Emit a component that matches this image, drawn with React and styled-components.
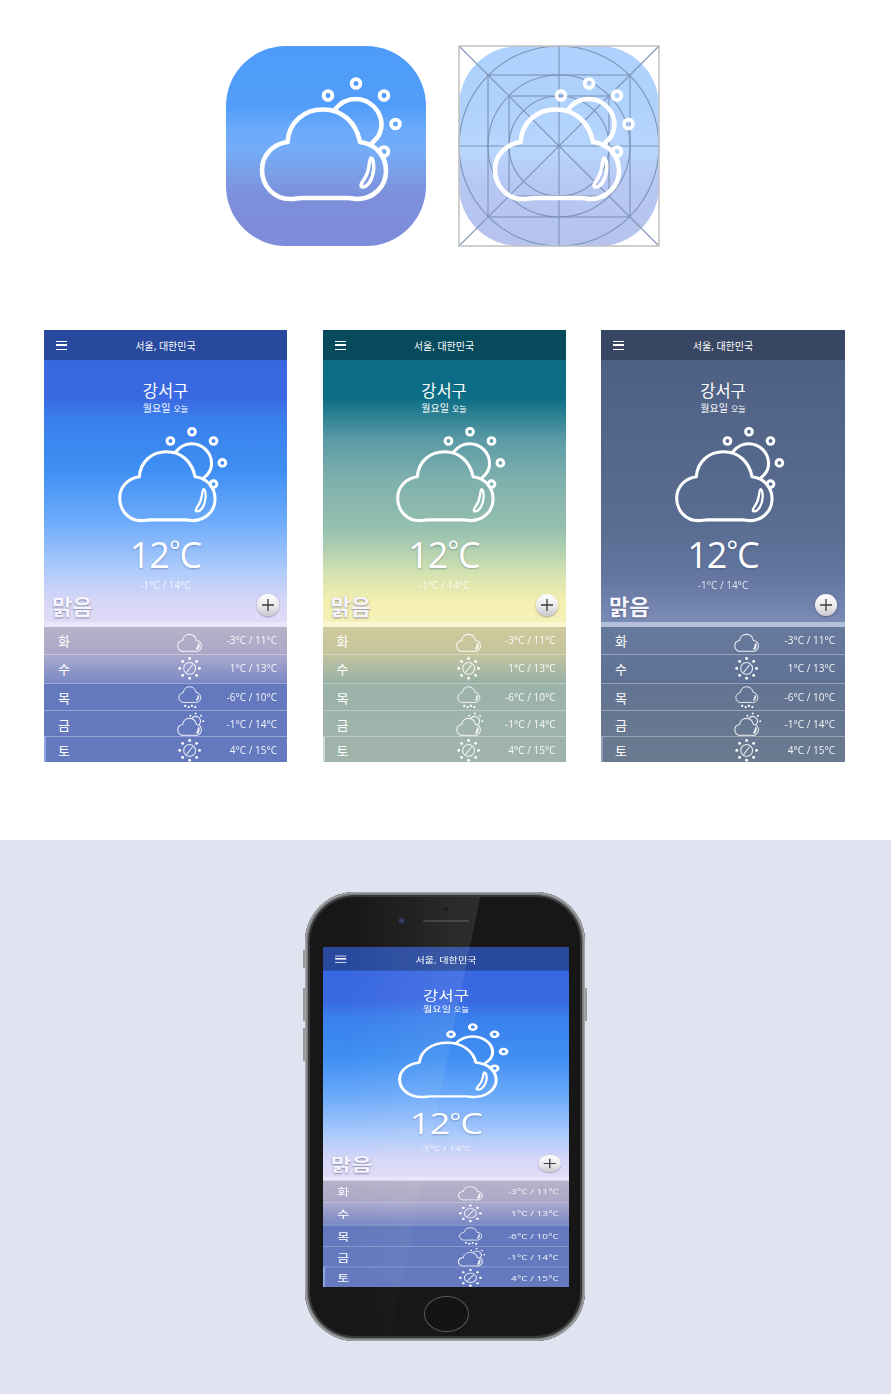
import styled, { createGlobalStyle } from "styled-components";

const GlobalStyle = createGlobalStyle`
  body {
    margin: 0;
    background: #fff;
    font-family: "Open Sans", "Noto Sans CJK KR", sans-serif;
  }
`;

const themes = {
  blue: {
    header: "#28499d",
    sky: "#3565e0 0, #3a69e2 68px, #3a80ec 90px, #3f8ff3 140px, #6caafa 190px, #aecbfb 240px, #d6d6f7 270px, #e0dcf7 292px",
    strip: "#e9e6fa",
    list: "#b7b2c8 0, #aba8c8 27px, #a6a7cc 30px, #7a88c4 56px, #6479bd 57px, #6479be 135px",
    edge: "#8ea3e0",
  },
  teal: {
    header: "#074a5c",
    sky: "#0b6a84 0, #0d6d86 68px, #2b7f93 84px, #5b9ba6 110px, #7fb0ad 150px, #96c0b0 200px, #cfe0b0 240px, #f3efb0 270px, #f6f1b8 292px",
    strip: "#faf6d2",
    list: "#d0c99c 0, #c4c49c 27px, #bdc2a0 30px, #98b1a6 56px, #9cb3aa 57px, #a0b3aa 135px",
    edge: "#c8dcd0",
  },
  slate: {
    header: "#374662",
    sky: "#4b5e80 0, #536689 100px, #5a6d92 200px, #6577a0 250px, #7a8cb5 292px",
    strip: "#b4bfdb",
    list: "#67799b 0, #64779a 27px, #627599 30px, #5f7296 56px, #637493 57px, #6a7a90 135px",
    edge: "#8f9db5",
  },
};

const forecast = [
  { day: "화", kind: "cloud", temp: "-3°C / 11°C", height: 27 },
  { day: "수", kind: "sun", temp: "1°C / 13°C", height: 29 },
  { day: "목", kind: "snow", temp: "-6°C / 10°C", height: 27 },
  { day: "금", kind: "partly", temp: "-1°C / 14°C", height: 26 },
  { day: "토", kind: "sun", temp: "4°C / 15°C", height: 26 },
];

const Page = styled.div`
  width: 891px;
  height: 1394px;
  overflow: hidden;
`;

const TopSection = styled.section`
  height: 840px;
  box-sizing: border-box;
  padding-top: 46px;
`;

const IconRow = styled.div`
  display: flex;
  gap: 33px;
  padding-left: 226px;
`;

const AppIcon = styled.div`
  position: relative;
  width: 200px;
  height: 200px;
  border-radius: 60px;
  background: linear-gradient(
    180deg,
    #4e9bf9 0,
    #519df9 30%,
    #6caafa 42%,
    #74acf8 52%,
    #7a9fe8 63%,
    #7d8fdb 76%,
    #7e8cd9 100%
  );
`;

const GhostIcon = styled(AppIcon)`
  background: linear-gradient(
    180deg,
    #aed2fd 0,
    #afd2fd 30%,
    #b8d6fd 52%,
    #b6c8f3 68%,
    #b6c3ec 100%
  );
`;

const FullSvg = styled.svg`
  position: absolute;
  inset: 0;
  width: 100%;
  height: 100%;
  overflow: visible;
`;

const ScreenRow = styled.div`
  display: flex;
  justify-content: space-between;
  padding: 84px 46px 0 44px;
`;

const ScreenBox = styled.div`
  width: ${(p) => p.$width}px;
  height: 432px;
  display: flex;
  flex-direction: column;
  color: #fff;
  background: linear-gradient(180deg, ${(p) => p.$sky});
`;

const Header = styled.header`
  height: 30px;
  flex: none;
  display: grid;
  grid-template-columns: 1fr auto 1fr;
  align-items: center;
  padding: 0 12px;
  background: ${(p) => p.$color};
  font-size: 10px;
`;

const Burger = styled.div`
  width: 11px;
  height: 9px;
  border-top: 1.5px solid #fff;
  border-bottom: 1.5px solid #fff;
  box-sizing: border-box;
  display: flex;
  align-items: center;
  &::before {
    content: "";
    width: 100%;
    height: 1.5px;
    background: #fff;
  }
`;

const Sky = styled.div`
  flex: 1;
  display: flex;
  flex-direction: column;
  align-items: center;
  padding-top: 20px;
`;

const District = styled.div`
  font-size: 16.5px;
  line-height: 21px;
`;

const DateLine = styled.div`
  font-size: 10px;
  line-height: 14px;
  small {
    font-size: 8px;
    margin-left: 3px;
  }
`;

const HeroIcon = styled.svg`
  width: 115.5px;
  height: 100px;
  margin: 10px 0 0 14.4px;
  flex: none;
`;

const Temperature = styled.div`
  font-size: 36px;
  line-height: 40px;
  letter-spacing: -1px;
  margin-top: 9px;
  text-shadow: 0 1px 2px rgba(40, 60, 110, 0.35);
  span {
    font-size: 27px;
    line-height: 0;
    vertical-align: 7px;
  }
`;

const Range = styled.div`
  font-size: 10px;
  line-height: 14px;
  margin-top: 3px;
  opacity: 0.8;
`;

const Condition = styled.div`
  align-self: stretch;
  display: flex;
  justify-content: space-between;
  align-items: center;
  height: 30px;
  margin-top: -2px;
  padding: 0 8px;
`;

const ConditionText = styled.span`
  font-size: 22px;
  font-weight: 700;
  color: #f6f5fd;
  text-shadow: 0 1px 2px rgba(70, 70, 110, 0.6);
`;

const AddButton = styled.div`
  width: 22px;
  height: 22px;
  border-radius: 50%;
  background: linear-gradient(180deg, #fff 0, #e7e7ea 60%, #c9c9ce 100%);
  box-shadow: 0 1px 2px rgba(40, 40, 70, 0.4);
  display: flex;
  align-items: center;
  justify-content: center;
  svg {
    width: 14px;
    height: 14px;
  }
`;

const Strip = styled.div`
  height: 5px;
  flex: none;
  background: ${(p) => p.$color};
`;

const List = styled.div`
  flex: none;
  background: linear-gradient(180deg, ${(p) => p.$list});
`;

const Row = styled.div`
  height: ${(p) => p.$height}px;
  box-sizing: border-box;
  display: grid;
  grid-template-columns: 112px 40px 1fr;
  align-items: center;
  padding: 0 0 2px 14px;
  border-top: ${(p) => (p.$first ? "none" : "1px solid rgba(255, 255, 255, 0.32)")};
  box-shadow: ${(p) => (p.$edge ? `inset 2px 0 0 ${p.$edge}` : "none")};
  font-size: 13px;
`;

const RowIcon = styled.svg`
  width: 40px;
  height: 26px;
  justify-self: center;
  overflow: visible;
`;

const RowTemp = styled.span`
  font-size: 10px;
  text-align: right;
  padding-right: 10px;
  white-space: nowrap;
  opacity: 0.92;
`;

const BottomSection = styled.section`
  height: 554px;
  box-sizing: border-box;
  padding-top: 52px;
  background: #e0e4f1;
`;

const Phone = styled.div`
  position: relative;
  width: 280px;
  height: 449px;
  margin-left: 305px;
  box-sizing: border-box;
  padding: 0 16px 0 18px;
  border-radius: 50px;
  background: #171717;
  box-shadow: inset 0 0 0 1.5px #a4a4a6, inset 0 0 0 3px #77787b, inset 0 0 0 5px #37373a;
`;

const SideButton = styled.div`
  position: absolute;
  ${(p) => (p.$right ? "right: -2px" : "left: -2px")};
  top: ${(p) => p.$top}px;
  width: 2px;
  height: ${(p) => p.$height}px;
  background: #9a9a9e;
`;

const EarPiece = styled.div`
  height: 55px;
  box-sizing: border-box;
  padding-top: 15px;
  display: flex;
  flex-direction: column;
  align-items: center;
`;

const Sensor = styled.div`
  width: 4px;
  height: 4px;
  border-radius: 50%;
  background: #0c0c0e;
`;

const Speaker = styled.div`
  position: relative;
  width: 46px;
  height: 2px;
  margin-top: 9px;
  border-radius: 1px;
  background: #39393b;
`;

const Camera = styled.div`
  position: absolute;
  left: -25px;
  top: -3px;
  width: 7px;
  height: 7px;
  border-radius: 50%;
  background: radial-gradient(circle, #3d4a86 0, #20243a 55%, #0d0d10 100%);
`;

const PhoneScreen = styled.div`
  width: 246px;
  height: 340px;
  overflow: hidden;
`;

const Squashed = styled.div`
  width: 243px;
  transform-origin: 0 0;
  transform: scale(1.0123, 0.787);
`;

const HomeArea = styled.div`
  display: flex;
  justify-content: center;
  padding-top: 9px;
`;

const HomeButton = styled.div`
  width: 43px;
  height: 34px;
  border-radius: 50%;
  border: 1.5px solid #56575a;
  background: #141414;
`;

const Glare = styled.div`
  position: absolute;
  inset: 5px;
  border-radius: 45px;
  pointer-events: none;
  background: linear-gradient(90deg, rgba(255, 255, 255, 0) 12%, rgba(255, 255, 255, 0.1) 63%);
  clip-path: polygon(0 0, 63% 0, 30% 100%, 0 100%);
  mask-image: linear-gradient(180deg, #000 45%, rgba(0, 0, 0, 0.35) 100%);
`;

const cloudPath =
  "M61.5 96C63 76 78 63.5 97 63.5C116 63.5 130 76 134 96C150 98 160 110 160 125C160 141 147 153 131 153C127 153 127 152 122 152L76 152C71 152 70 153 64 153C48 153 36 140 36 124C36 109 47 98 61.5 96Z";
const sunArc = "M109 63.5C115 56 122 53 129.5 53C144 53 155.5 65 155.5 79C155.5 86 152 92 146 97";
const crescent =
  "M145 112C147 112 148 118 147.7 123C147 133 142 141 136.5 141C134 141 135 138 137 135C140 131 142 127 143 120C143.5 115 144 112 145 112Z";
const rings = [
  [102, 49.5],
  [130, 37.5],
  [158, 49.5],
  [169.5, 78],
  [158, 105.5],
];

const Weather = ({ width = 5 }) => (
  <g fill="none" stroke="#fff" strokeWidth={width} strokeLinejoin="round" strokeLinecap="round">
    {rings.map(([x, y]) => (
      <circle key={x + "-" + y} cx={x} cy={y} r="4.4" strokeWidth="3.8" />
    ))}
    <path d={sunArc} />
    <path d={cloudPath} />
    <path d={crescent} strokeWidth={width * 0.75} />
  </g>
);

const IconGrid = () => (
  <g fill="none" stroke="#7d93b5" strokeWidth="1.1">
    <circle cx="100" cy="100" r="100" />
    <circle cx="100" cy="100" r="71" />
    <circle cx="100" cy="100" r="50" />
    <rect x="29" y="29" width="142" height="142" />
    <rect x="50" y="50" width="100" height="100" />
    <path d="M0 0L200 200M200 0L0 200M100 0V200M0 100H200" />
    <rect x="0" y="0" width="200" height="200" stroke="#c4c4c4" strokeWidth="1.6" />
  </g>
);

const dotAngles = [0, 45, 90, 135, 180, 225, 270, 315];

const smallIcons = {
  cloud: (
    <>
      <path d={cloudPath} />
      <path d={crescent} fill="rgba(255,255,255,0.45)" />
    </>
  ),
  sun: (
    <>
      <circle cx="98" cy="95" r="31" />
      <path d="M82 116L114 76" />
      {dotAngles.map((a) => (
        <circle
          key={a}
          cx={98 + 52 * Math.cos((a * Math.PI) / 180)}
          cy={95 + 52 * Math.sin((a * Math.PI) / 180)}
          r="7.5"
          fill="#fff"
          stroke="none"
        />
      ))}
    </>
  ),
  snow: (
    <>
      <path d={cloudPath} transform="translate(8 -20) scale(0.93)" />
      <path d={crescent} fill="rgba(255,255,255,0.45)" transform="translate(8 -20) scale(0.93)" />
      {[
        [75, 140],
        [93, 146],
        [110, 140],
        [128, 146],
      ].map(([x, y]) => (
        <circle key={x} cx={x} cy={y} r="6" fill="#fff" stroke="none" />
      ))}
    </>
  ),
  partly: (
    <>
      <path d={cloudPath} />
      <path d={sunArc} />
      <path d={crescent} fill="rgba(255,255,255,0.45)" />
      {rings.slice(0, 4).map(([x, y]) => (
        <circle key={x + "-" + y} cx={x} cy={y} r="5" fill="#fff" stroke="none" />
      ))}
    </>
  ),
};

const SmallIcon = ({ kind }) => (
  <RowIcon viewBox="-5 25 210 136" preserveAspectRatio="xMidYMid meet">
    <g fill="none" stroke="#fff" strokeOpacity="0.88" strokeWidth="5.5">
      {smallIcons[kind]}
    </g>
  </RowIcon>
);

const Screen = ({ theme, width = 243 }) => {
  const t = themes[theme];
  return (
    <ScreenBox $width={width} $sky={t.sky}>
      <Header $color={t.header}>
        <Burger />
        <span>서울, 대한민국</span>
      </Header>
      <Sky>
        <District>강서구</District>
        <DateLine>
          월요일<small>오늘</small>
        </DateLine>
        <HeroIcon viewBox="30 30 150 130">
          <Weather width={4} />
        </HeroIcon>
        <Temperature>
          12<span>°</span>C
        </Temperature>
        <Range>-1°C / 14°C</Range>
        <Condition>
          <ConditionText>맑음</ConditionText>
          <AddButton>
            <svg viewBox="0 0 14 14">
              <path d="M7 1V13M1 7H13" stroke="#3a3a3e" strokeWidth="1.3" />
            </svg>
          </AddButton>
        </Condition>
      </Sky>
      <Strip $color={t.strip} />
      <List $list={t.list}>
        {forecast.map((f, i) => (
          <Row key={f.day} $height={f.height} $first={i === 0} $edge={i === 4 ? t.edge : null}>
            <span>{f.day}</span>
            <SmallIcon kind={f.kind} />
            <RowTemp>{f.temp}</RowTemp>
          </Row>
        ))}
      </List>
    </ScreenBox>
  );
};

const App = () => (
  <Page>
    <GlobalStyle />
    <TopSection>
      <IconRow>
        <AppIcon>
          <FullSvg viewBox="0 0 200 200">
            <Weather width={4.6} />
          </FullSvg>
        </AppIcon>
        <GhostIcon>
          <FullSvg viewBox="0 0 200 200">
            <IconGrid />
            <Weather width={4.6} />
          </FullSvg>
        </GhostIcon>
      </IconRow>
      <ScreenRow>
        <Screen theme="blue" />
        <Screen theme="teal" />
        <Screen theme="slate" width={244} />
      </ScreenRow>
    </TopSection>
    <BottomSection>
      <Phone>
        <SideButton $top={58} $height={18} />
        <SideButton $top={96} $height={33} />
        <SideButton $top={136} $height={33} />
        <SideButton $right $top={96} $height={33} />
        <EarPiece>
          <Sensor />
          <Speaker>
            <Camera />
          </Speaker>
        </EarPiece>
        <PhoneScreen>
          <Squashed>
            <Screen theme="blue" />
          </Squashed>
        </PhoneScreen>
        <HomeArea>
          <HomeButton />
        </HomeArea>
        <Glare />
      </Phone>
    </BottomSection>
  </Page>
);

export default App;
